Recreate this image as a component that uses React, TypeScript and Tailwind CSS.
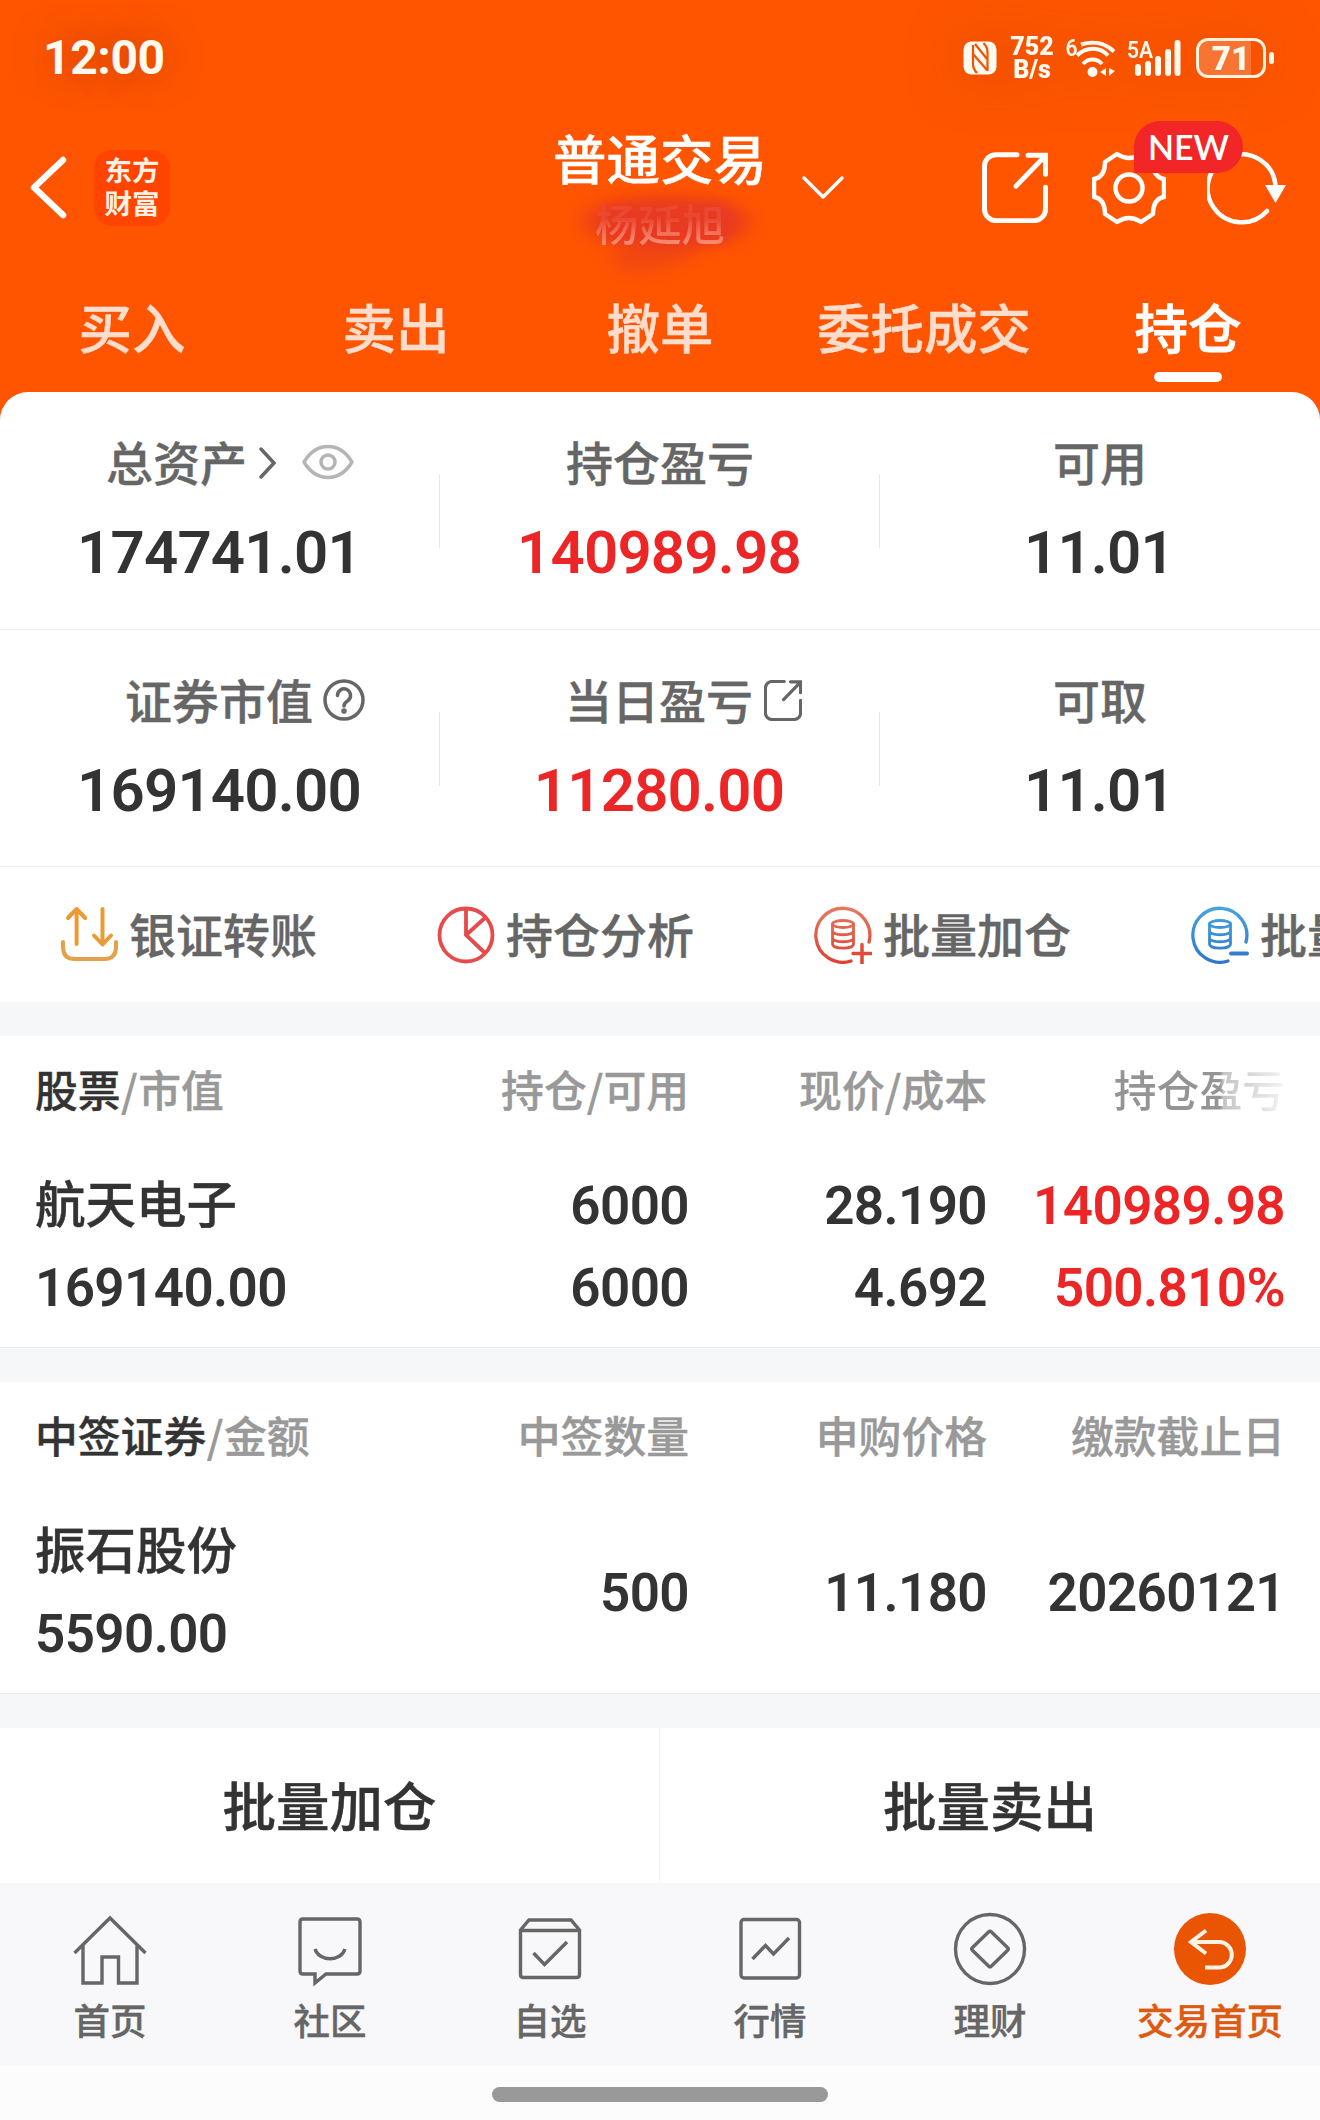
import type { ReactNode } from "react";

const TABS = ["买入", "卖出", "撤单", "委托成交", "持仓"];

/* ---------- Status bar ---------- */

function StatusBar() {
  return (
    <div className="flex h-[114px] items-center pl-[43px] pr-[46px] pt-[2px] font-[Roboto,sans-serif] text-[#fffaf0] [-webkit-text-stroke:0]">
      <span className="text-[48px] font-bold leading-[56px] tracking-[-0.4px] [text-shadow:0_0_40px_rgba(60,30,0,0.35)]">12:00</span>

      <div className="ml-auto flex items-center drop-shadow-[0_0_30px_rgba(60,30,0,0.25)]">
        {/* NFC */}
        <svg width="34" height="34" viewBox="0 0 34 34">
          <rect x="0.5" y="0.5" width="33" height="33" rx="8" fill="#fffaf0" />
          <path d="M10 4v19c0 4 1 6 4 9M12 3l12 15M10 13l14 16M24.500 30V11c0-4-1-6-4-9" fill="none" stroke="#f45200" strokeWidth="2.200" />
        </svg>
        <div className="ml-[13px] w-[44px] text-center text-[25px] font-black leading-[23px]">
          <div>752</div>
          <div>B/s</div>
        </div>
        {/* Wi-Fi */}
        <svg className="ml-[11px]" width="54" height="44" viewBox="0 0 54 44" fill="none" stroke="#fffaf0" strokeWidth="4">
          <text x="0.5" y="20" fontSize="24" fontWeight="600" fill="#fffaf0" stroke="none" fontFamily="Roboto" textLength="12" lengthAdjust="spacingAndGlyphs">6</text>
          <path d="M16 8.500c12-4 24-1.500 33 7" />
          <path d="M12 19.500c9-9 23-9 31 0" />
          <path d="M18 28c5-6 14-6 19 0" />
          <circle cx="27.500" cy="36" r="5" fill="#fffaf0" stroke="none" />
          <path d="M35 36l6-4v8zM43 32v8M44 32l6 3-6 5z" fill="#fffaf0" stroke="none" />
        </svg>
        {/* Signal */}
        <svg className="ml-[8px]" width="56" height="44" viewBox="0 0 56 44">
          <text x="0" y="21.500" fontSize="24" fontWeight="600" fill="#fffaf0" fontFamily="Roboto" textLength="26" lengthAdjust="spacingAndGlyphs">5A</text>
          <g stroke="#fffaf0" strokeWidth="6" strokeLinecap="round">
            <path d="M11 31v6M21 28v9M31 23v14M41 16v21M50.500 7v30" />
          </g>
        </svg>
        {/* Battery */}
        <div className="relative ml-[13px] flex h-[40px] w-[70px] items-center justify-center overflow-hidden rounded-[12px] border-[3px] border-[#fff3e0] text-[33px] font-black leading-none">
          <div className="absolute inset-y-0 left-0 w-[52px] bg-white/20" />
          <span className="relative">71</span>
        </div>
        <div className="ml-[3px] h-[12px] w-[5px] rounded-full bg-[#fffaf0]" />
      </div>
    </div>
  );
}

/* ---------- Header ---------- */

function ShareIcon({ size, stroke }: { size: number; stroke: number }) {
  return (
    <svg width={size} height={size * 1.08} viewBox="0 0 66 71" fill="none" stroke="currentColor" strokeWidth={stroke} strokeLinecap="round">
      <path d="M35 2.500H14A11.500 11.500 0 0 0 2.500 14v43A11.500 11.500 0 0 0 14 68.500h38A11.500 11.500 0 0 0 63.500 57V35" />
      <path d="M46 3h17.500v19M63 4L34 34" />
    </svg>
  );
}

function Header() {
  return (
    <div className="grid h-[150px] grid-cols-[520px_280px_1fr] items-center text-white">
      <div className="flex items-center pb-[2px] pl-[29px]">
        <svg width="40" height="66" viewBox="0 0 40 66" fill="none" stroke="white" strokeWidth="6.500" strokeLinecap="round" strokeLinejoin="round">
          <path d="M34 5L5 32.500 34 60" />
        </svg>
        <div className="ml-[25px] flex h-[76px] w-[76px] flex-col items-center justify-center rounded-[18px] bg-[#ff4400] pb-[4px] text-[27.500px] font-bold leading-[33px] text-[#fff0e4] [-webkit-text-stroke:0]">
          <span>东方</span>
          <span>财富</span>
        </div>
      </div>

      <div className="flex flex-col items-center pb-[2px]">
        <div className="h-[70px] text-[53.500px] font-medium leading-[70px]">普通交易</div>
        <div className="relative h-[62px] text-[43.500px] font-medium leading-[62px]">
          {/* Brush smear that hides the account name */}
          <div className="absolute -left-[14px] top-[5px] h-[50px] w-[172px] rounded-[50%] bg-[#e83a22]/80 blur-[9px]" />
          <div className="absolute left-[8px] top-[12px] h-[38px] w-[130px] rounded-[14px] bg-[#e83a22] blur-[6px]" />
          <div className="absolute left-[14px] top-[44px] h-[34px] w-[90px] -rotate-12 rounded-[50%] bg-[#e83a22]/50 blur-[9px]" />
          <span className="relative bg-linear-to-b from-[#ea4830] from-45% to-[#fa9680] to-90% bg-clip-text text-transparent [-webkit-text-stroke:0]">杨延旭</span>
        </div>
      </div>

      <div className="flex items-center pb-[3px]">
        <svg width="46" height="28" viewBox="0 0 46 28" fill="none" stroke="white" strokeWidth="3.500" strokeLinecap="round" strokeLinejoin="round">
          <path d="M4 4l19 19L42 4" />
        </svg>
        <div className="ml-[136px]">
          <ShareIcon size={66} stroke={5} />
        </div>
        <div className="relative ml-[44px]">
          <svg width="74" height="74" viewBox="-37 -37 74 74" fill="none" stroke="white" strokeWidth="4.500" strokeLinejoin="round">
            <path d="M-35-9Q-24-11-24-26L-12-34Q0-26 12-34L24-26Q24-11 35-9V9Q24 11 24 26L12 34Q0 26-12 34L-24 26Q-24 11-35 9Z" />
            <circle r="13.500" />
          </svg>
          <div className="absolute -top-[30px] left-[42px] z-10 flex h-[52px] w-[109px] items-center justify-center rounded-[26px] rounded-bl-none bg-[#f22626] font-[Lato,sans-serif] text-[34px] font-semibold leading-none [-webkit-text-stroke:0]">
            NEW
          </div>
        </div>
        <svg className="ml-[41px]" width="80" height="74" viewBox="0 0 80 74" fill="none" stroke="white" strokeWidth="4.500" strokeLinecap="round">
          <path d="M60 60A34 34 0 1 1 68.500 34" />
          <path d="M58 34h21L68.500 52z" fill="white" stroke="none" />
        </svg>
      </div>
    </div>
  );
}

function Tabs() {
  return (
    <div className="grid h-[128px] grid-cols-5 text-[53.500px] font-medium leading-[66px]">
      {TABS.map((tab) => {
        const active = tab === "持仓";
        return (
          <div
            key={tab}
            className={
              active
                ? "flex flex-col items-center pt-[29px] text-white [-webkit-text-stroke:0.8px]"
                : "flex flex-col items-center pt-[29px] text-[#ffddcc]"
            }
          >
            {tab}
            {active && <div className="mt-[13px] h-[10px] w-[68px] rounded-full bg-white" />}
          </div>
        );
      })}
    </div>
  );
}

/* ---------- Asset summary ---------- */

function Stat({ label, value, red, divider }: { label: ReactNode; value: string; red?: boolean; divider?: boolean }) {
  return (
    <div className="relative flex flex-col items-center pt-[41px]">
      <div className="flex h-[56px] items-center text-[47px] font-medium leading-[56px] text-[#666]">{label}</div>
      <div
        className={`-ml-[2px] mt-[31px] h-[64px] font-[Roboto,sans-serif] text-[60px] font-semibold leading-[65px] tracking-[-0.8px] [-webkit-text-stroke:0] ${red ? "text-[#ec2626]" : "text-[#333]"}`}
      >
        {value}
      </div>
      {divider && <div className="absolute right-0 top-[82px] h-[74px] w-px bg-[#e8e8e8]" />}
    </div>
  );
}

function Summary() {
  return (
    <>
      <div className="grid h-[238px] grid-cols-3 border-b border-[#ececec]">
        <Stat
          divider
          value="174741.01"
          label={
            <div className="ml-[20px] flex items-center">
              总资产
              <svg className="ml-[11px] mt-[3px]" width="20" height="34" viewBox="0 0 20 34" fill="none" stroke="#666" strokeWidth="3.500" strokeLinecap="round">
                <path d="M3 3l13 14L3 31" />
              </svg>
              <svg className="ml-[24px] mt-[2px]" width="52" height="36" viewBox="0 0 52 36" fill="none" stroke="#b5b5b5" strokeWidth="3.500">
                <path d="M2 18C8 8 16 2.500 26 2.500S44 8 50 18C44 28 36 33.500 26 33.500S8 28 2 18z" strokeLinejoin="round" />
                <circle cx="26" cy="18" r="7" />
              </svg>
            </div>
          }
        />
        <Stat divider red label="持仓盈亏" value="140989.98" />
        <Stat label="可用" value="11.01" />
      </div>
      <div className="grid h-[237px] grid-cols-3 border-b border-[#ececec]">
        <Stat
          divider
          value="169140.00"
          label={
            <div className="relative -ml-[2px]">
              证券市值
              <svg className="absolute left-full top-[8px] ml-[10px]" width="42" height="42" viewBox="0 0 42 42" fill="none" stroke="#666" strokeWidth="3.500" strokeLinecap="round">
                <circle cx="21" cy="21" r="19" />
                <path d="M14.500 16.500a6.500 6.500 0 1 1 10.500 5c-3 2-4 3-4 5.500" />
                <circle cx="21" cy="32" r="1" fill="#666" />
              </svg>
            </div>
          }
        />
        <Stat
          divider
          red
          value="11280.00"
          label={
            <div className="relative -ml-[2px]">
              当日盈亏
              <div className="absolute left-full top-[9px] ml-[11px]">
                <ShareIcon size={38} stroke={5.5} />
              </div>
            </div>
          }
        />
        <Stat label="可取" value="11.01" />
      </div>
    </>
  );
}

/* ---------- Quick actions ---------- */

function CoinsIcon({ from, to, id, plus }: { from: string; to: string; id: string; plus?: boolean }) {
  return (
    <svg width="58" height="58" viewBox="0 0 58 58" fill="none" stroke={`url(#${id})`} strokeWidth="3.300" strokeLinecap="round">
      <defs>
        <linearGradient id={id} gradientUnits="userSpaceOnUse" x1="0" y1="0" x2="0" y2="58">
          <stop offset="0" stopColor={from} />
          <stop offset="1" stopColor={to} />
        </linearGradient>
      </defs>
      <path d="M37 55A27 27 0 1 1 55 36" />
      <ellipse cx="29" cy="18" rx="10.500" ry="3.500" strokeWidth="2.800" />
      <path d="M18.500 18V38c0 5.500 21 5.500 21 0V18M18.500 25c0 5 21 5 21 0M18.500 32c0 5 21 5 21 0" strokeWidth="2.800" />
      {plus ? <path d="M39 47.500h18M48 38.500V57" strokeWidth="3.500" /> : <path d="M40 47.600L56 47.500" strokeWidth="4" />}
    </svg>
  );
}

function QuickActions() {
  return (
    <div className="flex h-[135px] items-center gap-[120px] overflow-hidden pl-[60px] text-[47px] font-medium leading-[58px] text-[#666]">
      <div className="flex shrink-0 items-center gap-[11px]">
        <svg width="58" height="58" viewBox="0 0 58 58" fill="none" stroke="#eb9b35" strokeWidth="4" strokeLinecap="round" strokeLinejoin="round">
          <path d="M16.600 38V3M8 12l8.600-9 8.600 9M42.500 3v35M34 29.500l8.500 9 8.500-9" />
          <path d="M3 36v5c0 8 4 12 12 12h29c8 0 12-4 12-12v-5" stroke="#e3a24a" />
        </svg>
        <span className="-mt-1">银证转账</span>
      </div>
      <div className="flex shrink-0 items-center gap-[11px]">
        <svg width="58" height="58" viewBox="0 0 58 58" fill="none" stroke="#e64a4a" strokeWidth="3.800">
          <circle cx="29" cy="29" r="26.500" />
          <path d="M29 2v27l20 19M29 29l20-18" />
        </svg>
        <span className="-mt-1">持仓分析</span>
      </div>
      <div className="flex shrink-0 items-center gap-[11px]">
        <CoinsIcon id="coins-add" from="#e67a62" to="#dc4030" plus />
        <span className="-mt-1">批量加仓</span>
      </div>
      <div className="flex shrink-0 items-center gap-[11px]">
        <CoinsIcon id="coins-sub" from="#48a4e0" to="#2f76cc" />
        <span className="-mt-1">批量卖出</span>
      </div>
    </div>
  );
}

/* ---------- Tables ---------- */

function Gap() {
  return <div className="h-[34px] bg-[#f6f7f9]" />;
}

function TableHead({ first, sub, cols, fade }: { first: string; sub: string; cols: string[]; fade?: boolean }) {
  return (
    <div className="grid h-[106px] grid-cols-[654px_298px_298px] items-center pb-[2px] pl-[35px] text-[42.800px] font-medium leading-[60px] text-[#999]">
      <div className="grid grid-cols-[1fr_auto]">
        <span>
          <span className="text-[#333]">{first}</span>
          <span className="mx-[0.5px]">/</span>
          {sub}
        </span>
        <span>{cols[0]}</span>
      </div>
      <div className="text-right">{cols[1]}</div>
      <div className="flex justify-end">
        <span
          className={
            fade ? "bg-linear-to-r from-[#949494] from-62% via-[#c4c4c4] via-64% to-[#f4f4f4] bg-clip-text text-transparent [-webkit-text-stroke:0]" : ""
          }
        >
          {cols[2]}
        </span>
      </div>
    </div>
  );
}

const NUM = "relative top-px font-[Roboto,sans-serif] text-[53px] font-semibold tracking-[-0.6px] [-webkit-text-stroke:0]";

function Holdings() {
  return (
    <section className="h-[312px] border-b border-[#ebebeb]">
      <TableHead first="股票" sub="市值" cols={["持仓/可用", "现价/成本", "持仓盈亏"]} fade />
      <div className="mt-[22px] grid grid-cols-[353px_301px_298px_298px] pl-[35px] text-right leading-[82px] text-[#333]">
        <div className="-mt-1 h-[86px] text-left text-[50.500px] font-medium">航天电子</div>
        <div className={NUM}>6000</div>
        <div className={NUM}>28.190</div>
        <div className={`${NUM} text-[#ec2626]`}>140989.98</div>
        <div className={`${NUM} text-left`}>169140.00</div>
        <div className={NUM}>6000</div>
        <div className={NUM}>4.692</div>
        <div className={`${NUM} text-[#ec2626]`}>500.810%</div>
      </div>
    </section>
  );
}

function Allotments() {
  return (
    <section className="h-[312px] border-b border-[#ebebeb]">
      <TableHead first="中签证券" sub="金额" cols={["中签数量", "申购价格", "缴款截止日"]} />
      <div className="mt-[22px] grid grid-cols-[353px_301px_298px_298px] items-center pl-[35px] text-right leading-[82px] text-[#333]">
        <div className="text-left">
          <div className="-mt-1 h-[86px] text-[50.500px] font-medium">振石股份</div>
          <div className={NUM}>5590.00</div>
        </div>
        <div className={NUM}>500</div>
        <div className={NUM}>11.180</div>
        <div className={NUM}>20260121</div>
      </div>
    </section>
  );
}

/* ---------- Bottom navigation ---------- */

const NAV: { label: string; icon: ReactNode }[] = [
  { label: "首页", icon: <path d="M2.500 42L38 7l35.500 35M11 34v38h19V46h16.500v26H65V34" /> },
  {
    label: "社区",
    icon: <path d="M11 8h54q3 0 3 3v49q0 3-3 3H34l-11 9v-9H11q-3 0-3-3V11q0-3 3-3zM23 38c4 13 26 13 30 0" />,
  },
  {
    label: "自选",
    icon: <path d="M17 9h42l8.500 10v44.500q0 3-3 3H11.500q-3 0-3-3V19zM8.500 19.500h59M21.500 42l11 11.500L55 31" />,
  },
  {
    label: "行情",
    icon: (
      <>
        <rect x="9" y="8.500" width="58.500" height="58.500" rx="3" />
        <path d="M20.500 48L33.500 34.500l8 8.500L57 27" />
      </>
    ),
  },
  {
    label: "理财",
    icon: (
      <>
        <circle cx="38" cy="38" r="34.500" />
        <path d="M36.800 20.800q1.200-1.200 2.400 0l16.500 16q1.200 1.200 0 2.400l-16.500 16q-1.200 1.200-2.400 0l-16.500-16q-1.200-1.200 0-2.400z" />
      </>
    ),
  },
  {
    label: "交易首页",
    icon: (
      <>
        <circle cx="38" cy="38" r="36" fill="#ea5504" stroke="none" />
        <path d="M34 19.500L19 31l15 11.500M19 31h28a12.500 12.500 0 0 1 0 25.500H33" stroke="#fff3e6" strokeWidth="4" />
      </>
    ),
  },
];

function BottomNav() {
  return (
    <nav className="grid h-[183px] grid-cols-6 bg-[#f8f8fa]">
      {NAV.map(({ label, icon }) => (
        <div key={label} className="flex flex-col items-center pt-[28px]">
          <svg width="76" height="76" viewBox="0 0 76 76" fill="none" stroke="#666" strokeWidth="3.400">
            {icon}
          </svg>
          <span className={`mt-[7px] text-[36.500px] font-medium leading-[52px] ${label === "交易首页" ? "text-[#dd5a12]" : "text-[#666]"}`}>{label}</span>
        </div>
      ))}
    </nav>
  );
}

export default function App() {
  return (
    <div className="h-[2120px] w-[1320px] overflow-hidden bg-[#ff5500] font-['Noto_Sans_CJK_SC',sans-serif] [-webkit-text-stroke:0.4px]">
      <StatusBar />
      <Header />
      <Tabs />
      <main className="rounded-t-[28px] bg-white">
        <Summary />
        <QuickActions />
        <Gap />
        <Holdings />
        <Gap />
        <Allotments />
        <Gap />
        <div className="grid h-[155px] grid-cols-2 text-center text-[53.500px] font-medium leading-[152px] text-[#333]">
          <div className="border-r border-[#f4f4f4]">批量加仓</div>
          <div>批量卖出</div>
        </div>
        <BottomNav />
        <div className="flex h-[54px] justify-center bg-[#fcfcfc] pt-[21px]">
          <div className="h-[15px] w-[336px] rounded-full bg-[#999]" />
        </div>
      </main>
    </div>
  );
}
